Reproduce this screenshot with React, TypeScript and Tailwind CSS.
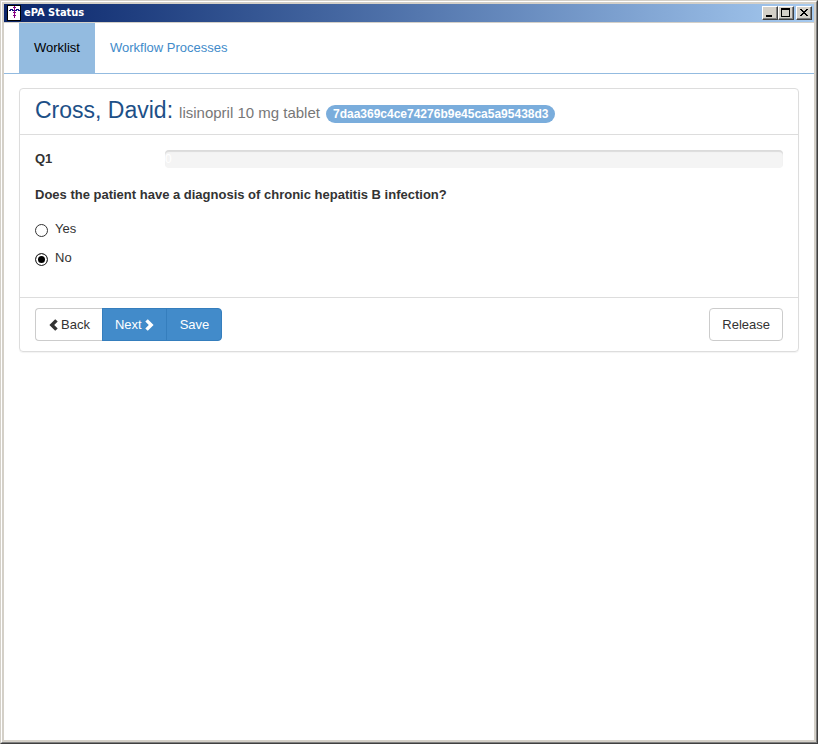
import React, { useState } from 'react';

const AppIcon = () => (
  <svg className="h-4 w-4 shrink-0" viewBox="0 0 16 16" shapeRendering="crispEdges" aria-hidden="true">
    <rect x="1" y="0" width="14" height="16" fill="#000" />
    <rect x="2" y="1" width="12" height="14" fill="#fff" />
    <path fill="#10107c" d="M4 4h3v1H4zM10 4h3v1h-3zM3 5h2v1H3zM12 5h2v1h-2zM6 5h5v1H6z" />
    <path fill="#860083" d="M8 1h1v12H8zM7 2h3v1H7zM7 7h3v1H7zM7 10h3v1H7z" />
  </svg>
);

const ChevronLeft = () => (
  <svg className="h-3 w-[9px] shrink-0" viewBox="0 0 9 12" fill="currentColor" aria-hidden="true">
    <path d="M6.2.3 8.7 2.6 5.2 6l3.5 3.4-2.5 2.3L.4 6z" />
  </svg>
);

const ChevronRight = () => (
  <svg className="h-3 w-[9px] shrink-0" viewBox="0 0 9 12" fill="currentColor" aria-hidden="true">
    <path d="M2.8.3.3 2.6 3.8 6 .3 9.4l2.5 2.3L8.6 6z" />
  </svg>
);

interface CaptionButtonProps {
  label: string;
  path: string;
}

const CaptionButton: React.FC<CaptionButtonProps> = ({ label, path }) => (
  <button
    type="button"
    aria-label={label}
    className="h-[14px] w-4 border border-t-white border-l-white border-r-[#404040] border-b-[#404040] bg-[#d4d0c8] shadow-[inset_-1px_-1px_0_#808080]"
  >
    <svg className="block h-3 w-[14px]" viewBox="0 0 14 12" shapeRendering="crispEdges" aria-hidden="true">
      <path fill="#000" d={path} />
    </svg>
  </button>
);

const TitleBar = () => (
  <header className="flex h-[18px] items-center bg-linear-to-r from-[#0a246a] to-[#a6caf0] pr-[2px] pl-[2px]">
    <AppIcon />
    <span className="ml-[2px] font-['DejaVu_Sans_Condensed','DejaVu_Sans',sans-serif] text-[11px] font-bold text-white">
      ePA Status
    </span>
    <div className="ml-auto flex">
      <CaptionButton label="Minimize" path="M3 8h6v2H3z" />
      <CaptionButton label="Maximize" path="M2 1h9v2H2zM2 3h1v7H2zM10 3h1v7h-1zM3 9h7v1H3z" />
      <span className="w-[2px]" />
      <CaptionButton
        label="Close"
        path="M3 2h2v1H3zM9 2h2v1H9zM4 3h2v1H4zM8 3h2v1H8zM5 4h4v1H5zM6 5h2v1H6zM5 6h4v1H5zM4 7h2v1H4zM8 7h2v1H8zM3 8h2v1H3zM9 8h2v1H9z"
      />
    </div>
  </header>
);

const answers = ['Yes', 'No'];

export default function App() {
  const [answer, setAnswer] = useState('No');

  return (
    <div className="flex min-h-screen flex-col border border-t-[#d4d0c8] border-l-[#d4d0c8] border-r-[#404040] border-b-[#404040] bg-white font-['Liberation_Sans',Arial,sans-serif] text-[13px] leading-[18px] text-[#333]">
      <div className="flex grow flex-col border border-t-white border-l-white border-r-[#808080] border-b-[#808080]">
        <div className="flex grow flex-col border-2 border-[#d4d0c8]">
          <TitleBar />

          <nav className="flex border-t border-b border-t-[#d4d0c8] border-b-[#93bbe0] px-[15px]">
            <a href="#worklist" aria-current="page" className="bg-[#93bbe0] px-[15px] py-4 text-black">
              Worklist
            </a>
            <a href="#processes" className="px-[15px] py-4 text-[#428bca]">
              Workflow Processes
            </a>
          </nav>

          <main className="px-[15px] py-[14px]">
            <section className="rounded border border-[#ddd] shadow-[0_1px_1px_rgba(0,0,0,0.05)]">
              <div className="flex h-[46px] items-center border-b border-[#ddd] px-[15px]">
                <h1 className="flex items-baseline text-[23px] leading-6 text-[#1d5087]">
                  Cross, David:
                  <small className="ml-[6px] text-[15px] text-[#777]">lisinopril 10 mg tablet</small>
                  <span className="ml-[6px] rounded-full bg-[#7aaddc] px-[7px] text-xs leading-[18px] font-bold text-white">
                    7daa369c4ce74276b9e45ca5a95438d3
                  </span>
                </h1>
              </div>

              <form className="px-[15px] pt-[15px] pb-[30px]">
                <div className="flex">
                  <span id="question-number" className="w-[130px] font-bold">Q1</span>
                  <div
                    role="progressbar"
                    aria-labelledby="question-number"
                    aria-valuenow={0}
                    className="h-[18px] grow rounded bg-[#f4f4f4] text-xs leading-[18px] text-white shadow-[inset_0_2px_1px_rgba(0,0,0,0.1)]"
                  >
                    0
                  </div>
                </div>

                <fieldset className="mt-[18px]">
                  <legend className="mb-4 font-bold">
                    Does the patient have a diagnosis of chronic hepatitis B infection?
                  </legend>
                  <div className="flex flex-col gap-[11px]">
                    {answers.map((item) => (
                      <label key={item} className="flex items-center gap-[7px]">
                        <input
                          type="radio"
                          name="diagnosis"
                          value={item}
                          checked={answer === item}
                          onChange={() => setAnswer(item)}
                          className="mt-[2px] h-[13px] w-[13px] appearance-none rounded-full border border-[#333] bg-white checked:bg-black checked:shadow-[inset_0_0_0_2px_white]"
                        />
                        {item}
                      </label>
                    ))}
                  </div>
                </fieldset>
              </form>

              <footer className="flex items-center justify-between border-t border-[#ddd] px-[15px] py-[10px]">
                <div className="flex">
                  <button type="button" className="flex h-[33px] items-center gap-[3px] rounded-l border border-r-0 border-[#ccc] bg-white px-3 pl-[13px]">
                    <ChevronLeft /> Back
                  </button>
                  <button type="button" className="flex h-[33px] items-center gap-[3px] border border-[#357ebd] bg-[#428bca] px-3 text-white">
                    Next <ChevronRight />
                  </button>
                  <button type="button" className="-ml-px h-[33px] rounded-r border border-[#357ebd] bg-[#428bca] px-[13px] pr-3 text-white">
                    Save
                  </button>
                </div>
                <button type="button" className="h-[33px] rounded border border-[#ccc] bg-white px-3">
                  Release
                </button>
              </footer>
            </section>
          </main>
        </div>
      </div>
    </div>
  );
}
